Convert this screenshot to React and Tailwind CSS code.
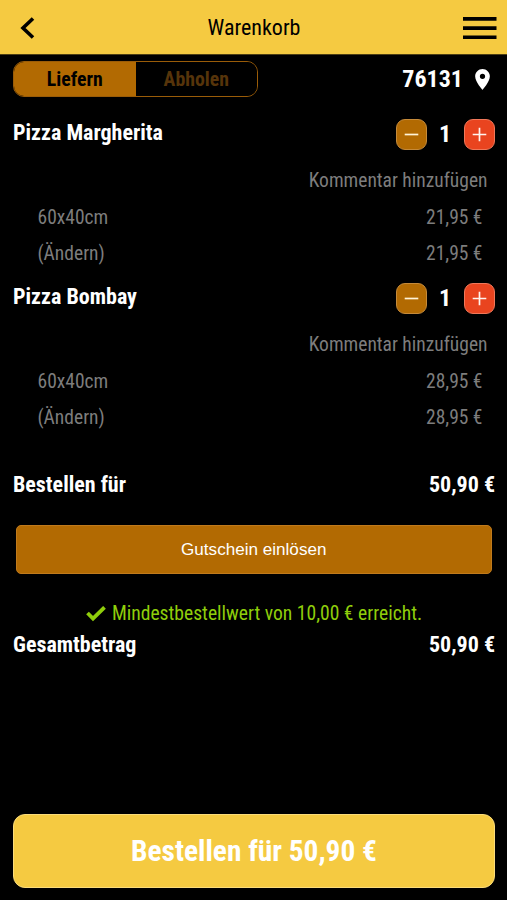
import { useState } from "react";

const ITEMS = [
    { id: 1, name: "Pizza Margherita", size: "60x40cm", price: "21,95 €" },
    { id: 2, name: "Pizza Bombay", size: "60x40cm", price: "28,95 €" }
];

/* ================= CART ITEM ================= */

function CartItem({ item }) {

    const [count, setCount] = useState(1);

    return (
        <div className="h-[164px] text-[19.5px] text-[#7d7d7d]">

            <div className="flex h-[52px] items-center justify-between">

                <h2 className="pb-[3px] text-[22px] font-bold text-white">{item.name}</h2>

                <div className="flex items-center text-white">

                    <button
                        onClick={() => setCount((c) => Math.max(0, c - 1))}
                        className="flex h-[31px] w-[31px] items-center justify-center rounded-[9px] border border-[#c58a3a] bg-[#b26a02]"
                    >
                        <svg width="15" height="15" viewBox="0 0 15 15" stroke="#fff3d8" strokeWidth="1.7">
                            <path d="M.7 7.5h13.6" />
                        </svg>
                    </button>

                    <span className="w-[37px] pr-px text-center text-[24px] font-bold">{count}</span>

                    <button
                        onClick={() => setCount((c) => c + 1)}
                        className="flex h-[31px] w-[31px] items-center justify-center rounded-[9px] border border-[#f0785a] bg-[#e9441f]"
                    >
                        <svg width="15" height="15" viewBox="0 0 15 15" stroke="#fff3ee" strokeWidth="1.7">
                            <path d="M.7 7.5h13.6M7.5.7v13.6" />
                        </svg>
                    </button>

                </div>

            </div>

            <div className="flex h-[40px] items-center justify-end pt-[2px] pr-[7.5px]">Kommentar hinzufügen</div>

            <div className="flex h-[35px] items-center justify-between pt-px pr-[12.5px] pl-[24.5px]">
                <span>{item.size}</span>
                <span>{item.price}</span>
            </div>

            <div className="flex h-[36px] items-center justify-between pt-[2px] pr-[12.5px] pl-[24.5px]">
                <span>(Ändern)</span>
                <span>{item.price}</span>
            </div>

        </div>
    );
}

export default function App() {

    const [mode, setMode] = useState("Liefern");

    return (
        <div className="flex h-[900px] w-[507px] flex-col overflow-hidden bg-black font-['Roboto_Condensed',Roboto,sans-serif] leading-none text-white [font-stretch:75%]">

            {/* HEADER */}
            <header className="flex h-[54px] shrink-0 items-center justify-between bg-[#f5ca41] pt-[2px] pr-[10px] pl-[20px] text-black">

                <svg width="15" height="22" viewBox="0 0 15 22" fill="none" stroke="currentColor" strokeWidth="3.6">
                    <path d="M13 1.5 3 11l10 9.5" />
                </svg>

                <h1 className="pl-[10px] text-[22px]">Warenkorb</h1>

                <svg width="34" height="24" viewBox="0 0 34 24" fill="currentColor">
                    <path d="M0 1h33.5v3.7H0zM0 10.2h33.5v3.7H0zM0 19.4h33.5v3.7H0z" />
                </svg>

            </header>

            <main className="flex flex-1 flex-col border-t border-[#4d3f14] px-3 pt-[6px] pb-3 pl-[13px]">

                {/* DELIVERY MODE */}
                <div className="flex h-[36px] items-center justify-between">

                    <div className="flex h-[36px] w-[245px] overflow-hidden rounded-[11px] border border-[#9a5c08]">
                        {["Liefern", "Abholen"].map((label) => (
                            <button
                                key={label}
                                onClick={() => setMode(label)}
                                className={`flex-1 pt-[2px] text-[19.8px] font-bold ${mode === label ? "bg-[#b26a02] text-black" : "bg-black text-[#56340a]"}`}
                            >
                                {label}
                            </button>
                        ))}
                    </div>

                    <div className="flex items-center gap-[12px] pr-[5px] text-[24px] font-bold">
                        76131
                        <svg width="15" height="21" viewBox="5 2 14 20" fill="currentColor">
                            <path d="M12 2C8.13 2 5 5.13 5 9c0 5.25 7 13 7 13s7-7.75 7-13c0-3.87-3.13-7-7-7zm0 9.5a2.5 2.5 0 1 1 0-5 2.5 2.5 0 0 1 0 5z" />
                        </svg>
                    </div>

                </div>

                {/* ITEMS */}
                <div className="mt-[11px]">
                    {ITEMS.map((item) => (
                        <CartItem key={item.id} item={item} />
                    ))}
                </div>

                {/* TOTALS */}
                <div className="mt-[29px] flex h-[40px] items-center justify-between text-[22px] font-bold">
                    <span>Bestellen für</span>
                    <span>50,90 €</span>
                </div>

                <button className="mr-[3px] ml-[2.5px] mt-[20px] h-[49px] rounded-[5px] border border-[#c07a1c] bg-[#b26a02] font-['Liberation_Sans',Arial,sans-serif] text-[17.1px]">
                    Gutschein einlösen
                </button>

                <div className="mt-[24px] flex h-[30px] items-center justify-center gap-[6px] pt-[2px] text-[19.6px] text-[#8fce0b]">
                    <svg width="20" height="16" viewBox="0 0 20 16" fill="none" stroke="currentColor" strokeWidth="3.8">
                        <path d="m1.5 7 5.5 5.5L18.5 1.3" />
                    </svg>
                    Mindestbestellwert von 10,00 € erreicht.
                </div>

                <div className="flex h-[32px] items-center justify-between pt-px text-[22px] font-bold">
                    <span>Gesamtbetrag</span>
                    <span>50,90 €</span>
                </div>

                <button className="mt-auto h-[74px] shrink-0 rounded-[12px] border border-[#fbdc7a] bg-[#f5ca41] pt-[2px] text-[29.4px] font-bold">
                    Bestellen für 50,90 €
                </button>

            </main>

        </div>
    );
}
